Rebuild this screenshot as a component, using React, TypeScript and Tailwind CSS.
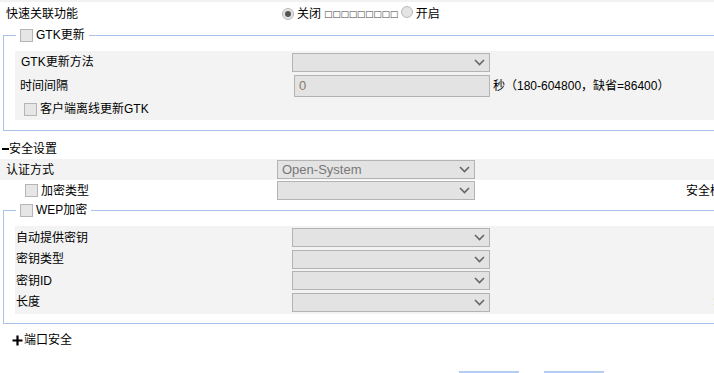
import React from "react";

const font = { fontFamily: '"Liberation Sans", "Noto Sans CJK SC", sans-serif' };

function Check() {
  return <span className="inline-block w-[13px] h-[13px] shrink-0 border border-[#b5b5b5] bg-[#e6e6e6]" />;
}

function Radio({ on }: { on?: boolean }) {
  return (
    <span className="inline-flex items-center justify-center w-[12px] h-[12px] shrink-0 rounded-full border border-[#b8b8b8] bg-[#e4e4e4]">
      {on && <span className="w-[6px] h-[6px] rounded-full bg-[#555]" />}
    </span>
  );
}

function Select({ value, w = 198 }: { value?: string; w?: number }) {
  return (
    <div
      className="flex shrink-0 items-center justify-between h-[19px] border border-[#b3b3b3] bg-[#e3e3e3] pl-[4px] pr-[4px] text-[#777]"
      style={{ width: w }}
    >
      <span className="text-[13px] leading-none">{value}</span>
      <svg width="11" height="7" viewBox="0 0 11 7" className="shrink-0">
        <path d="M1 1l4.5 4.5L10 1" fill="none" stroke="#666" strokeWidth="1.6" />
      </svg>
    </div>
  );
}

function Legend({ label }: { label: string }) {
  return (
    <legend className="ml-[1px] px-[4px]">
      <div className="flex items-center gap-[3px] h-[16px]">
        <Check />
        <span>{label}</span>
      </div>
    </legend>
  );
}

export default function App() {
  return (
    <div className="w-[714px] h-[373px] overflow-hidden bg-white text-[12px] leading-[16px] text-black" style={font}>
      <div className="h-[2px] bg-[#f2f2f2]" />

      {/* 快速关联 */}
      <div className="flex items-center h-[24px]">
        <span className="w-[282px] shrink-0 pl-[6px]">快速关联功能</span>
        <Radio on />
        <span className="ml-[3px]">关闭</span>
        <span className="ml-[3px] text-[9px] tracking-[-0.3px] text-[#444]" style={{ fontFamily: '"DejaVu Sans", sans-serif' }}>
          □□□□□□□□□
        </span>
        <span className="ml-[3px]"><Radio /></span>
        <span className="ml-[3px]">开启</span>
      </div>

      {/* GTK更新 */}
      <fieldset className="mt-[1px] ml-[3px] w-[720px] border border-r-0 border-[#a9c2e8] pl-[11px] pt-[8px] pb-[10px]">
        <Legend label="GTK更新" />
        <div className="bg-[#f3f3f3]">
          <div className="flex items-center h-[22px]">
            <span className="w-[277px] shrink-0 pl-[6px]">GTK更新方法</span>
            <Select />
          </div>
          <div className="flex items-center h-[25px]">
            <span className="w-[279px] shrink-0 pl-[5px]">时间间隔</span>
            <div className="w-[196px] shrink-0 h-[22px] border border-[#b3b3b3] bg-[#e3e3e3] pl-[4px] flex items-center text-[#8a7a6a] text-[13px]">
              0
            </div>
            <span className="ml-[3px] whitespace-nowrap">秒（180-604800，缺省=86400）</span>
          </div>
          <div className="flex items-center h-[22px] pl-[9px] gap-[3px]">
            <Check />
            <span>客户端离线更新GTK</span>
          </div>
        </div>
      </fieldset>

      {/* 安全设置 */}
      <div className="flex items-center h-[21px] mt-[7px]">
        <span className="inline-block w-[7px] h-[2px] bg-black ml-[2px]" />
        <span>安全设置</span>
      </div>
      <div className="flex items-center h-[21px] bg-[#f3f3f3]">
        <span className="w-[277px] shrink-0 pl-[6px]">认证方式</span>
        <Select value="Open-System" />
      </div>
      <div className="flex items-center h-[21px]">
        <div className="w-[277px] shrink-0 pl-[25px] flex items-center gap-[3px]">
          <Check />
          <span>加密类型</span>
        </div>
        <Select />
        <span className="ml-[211px] shrink-0 whitespace-nowrap">安全模式</span>
      </div>

      {/* WEP加密 */}
      <fieldset className="mt-[1px] ml-[3px] w-[720px] border border-r-0 border-[#a9c2e8] pl-[11px] pt-[8px] pb-[9px]">
        <Legend label="WEP加密" />
        <div className="bg-[#f3f3f3] py-[1px]">
          {["自动提供密钥", "密钥类型", "密钥ID", "长度"].map((label, i) => (
            <div key={label} className="flex items-center h-[21.5px]">
              <span className="w-[277px] shrink-0 pl-[1px]">{label}</span>
              <Select />
              {i === 3 && <span className="ml-[222px] shrink-0">：</span>}
            </div>
          ))}
        </div>
      </fieldset>

      {/* 端口安全 */}
      <div className="flex items-center h-[20px] mt-[6px] pl-[12px]">
        <svg width="11" height="11" viewBox="0 0 11 11" className="shrink-0">
          <path d="M5.5 0.5v10M0.5 5.5h10" stroke="#000" strokeWidth="2.2" />
        </svg>
        <span className="ml-[1px]">端口安全</span>
      </div>

      <div className="flex gap-[25px] pl-[459px] mt-[21px]">
        <button className="w-[60px] h-[24px] border-t-2 border-[#b4cdf0] bg-white" />
        <button className="w-[60px] h-[24px] border-t-2 border-[#b4cdf0] bg-white" />
      </div>
    </div>
  );
}
